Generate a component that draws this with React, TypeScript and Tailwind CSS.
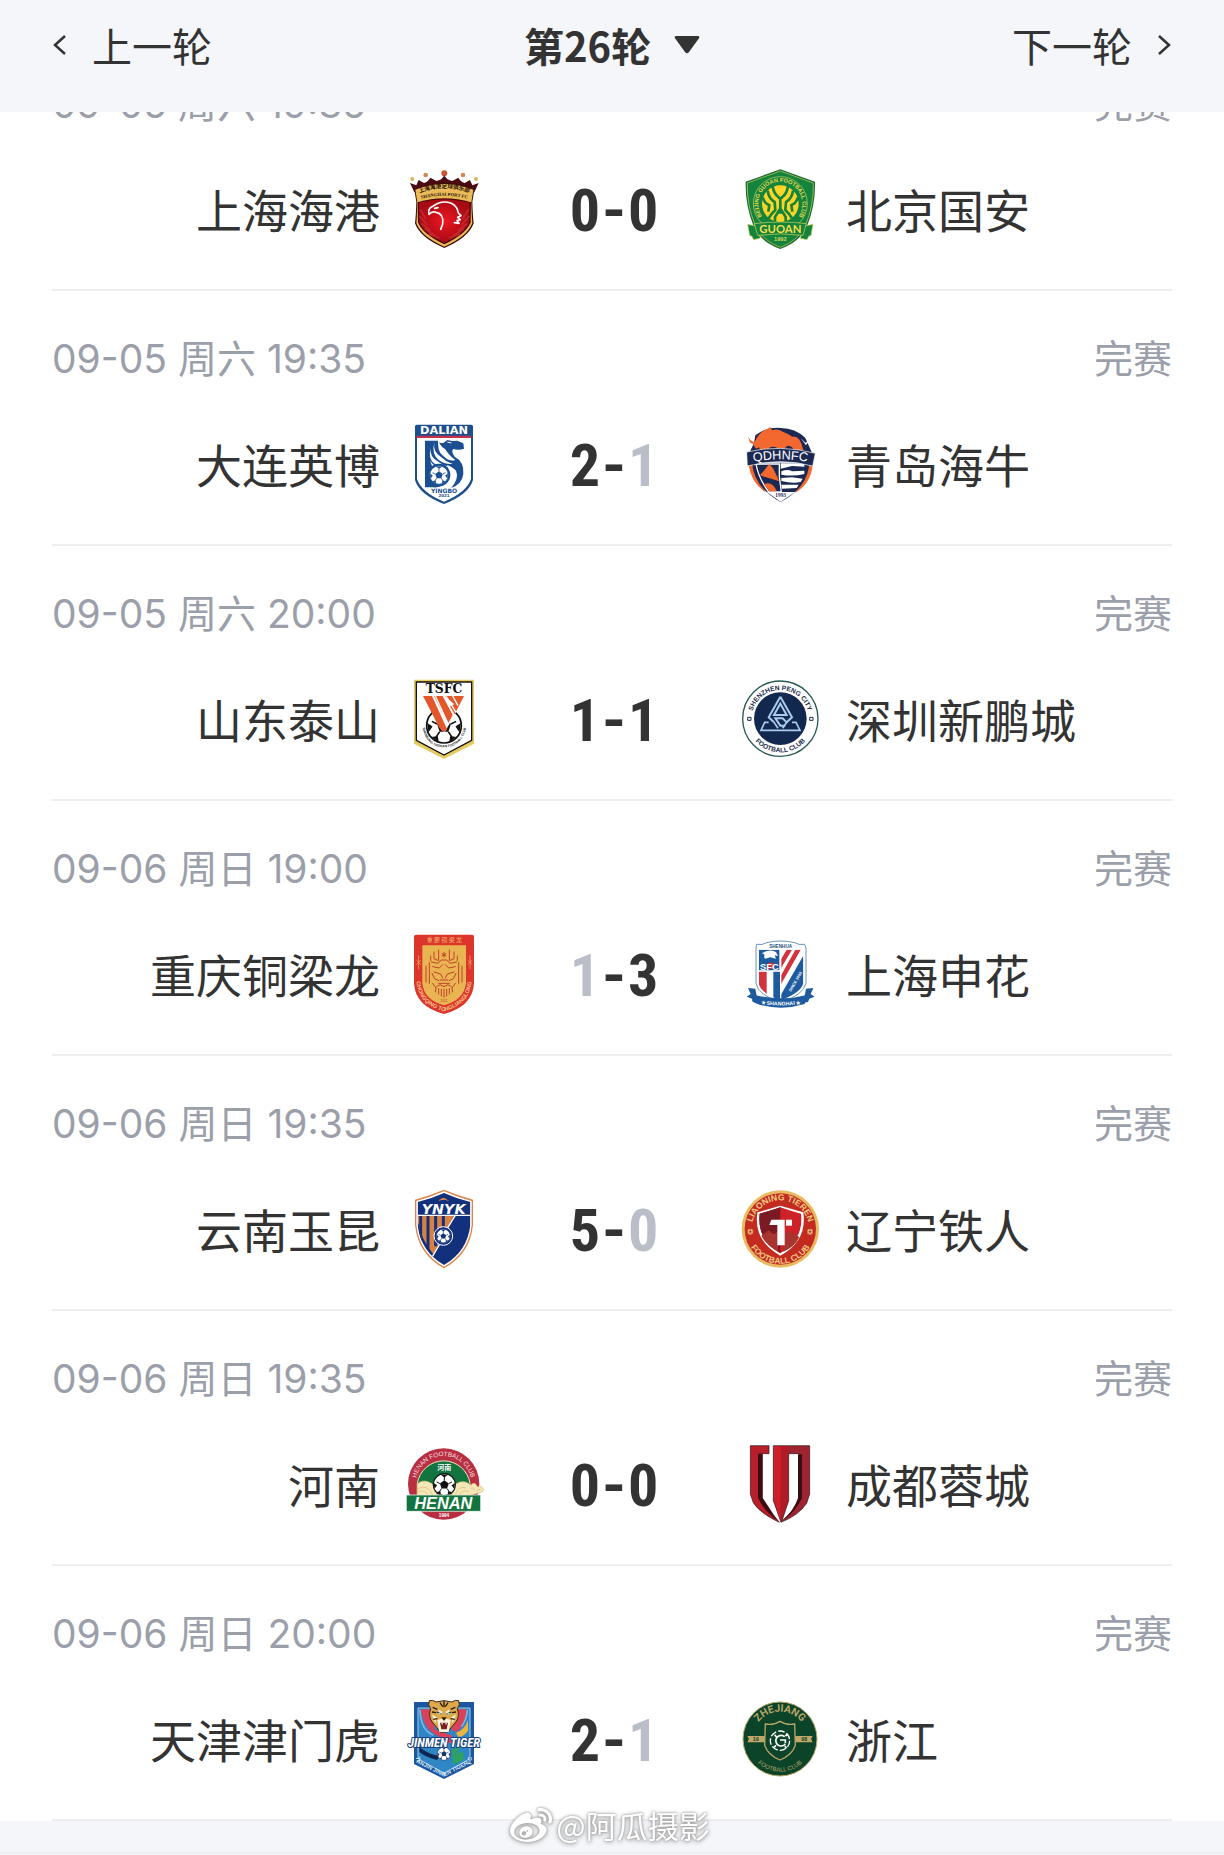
import { useState, type ReactNode } from "react";
import { SiSinaweibo } from "react-icons/si";

const cjk = "font-['Noto_Sans_CJK_SC',sans-serif]";

type CrestProps = { label: string; box: string; children: ReactNode };

function Crest({ label, box, children }: CrestProps) {
  return (
    <svg viewBox={box} role="img" aria-label={label} className="size-20 shrink-0 overflow-visible">
      {children}
    </svg>
  );
}

type CurveProps = {
  id: string;
  d: string;
  size: number;
  fill: string;
  weight?: number;
  family?: string;
  children: string;
};

function Curve({ id, d, size, fill, weight = 700, family = "Liberation Sans, sans-serif", children }: CurveProps) {
  return (
    <>
      <path id={id} d={d} fill="none" />
      <text fontSize={size} fill={fill} fontWeight={weight} fontFamily={family} textAnchor="middle">
        <textPath href={"#" + id} startOffset="50%">
          {children}
        </textPath>
      </text>
    </>
  );
}

function Ball({ x, y, r, ink = "#111", paper = "#fff" }: { x: number; y: number; r: number; ink?: string; paper?: string }) {
  return (
    <g transform={`translate(${x} ${y}) scale(${r / 10})`}>
      <circle r="10" fill={paper} stroke={ink} strokeWidth="1" />
      <path d="M0-4 4-1 2.5 3.5-2.5 3.5-4-1Z" fill={ink} />
      <path d="M-3.5-9.2H3.5L0-6.6ZM9.6-1.5 9 4 6.6 0.5ZM-9.6-1.5-9 4-6.6 0.5ZM3 9.4 7.2 6.6 3.6 6ZM-3 9.4-7.2 6.6-3.6 6Z" fill={ink} />
      <path d="M0-4V-7M4-1 7-2.5M2.5 3.5 4.5 6.5M-2.5 3.5-4.5 6.5M-4-1-7-2.5" stroke={ink} strokeWidth="0.9" />
    </g>
  );
}

function ShanghaiPort() {
  return (
    <Crest label="上海海港" box="42 42 240 240">
      <defs>
        <radialGradient id="port-red">
          <stop offset="0" stopColor="#ee1620" />
          <stop offset="1" stopColor="#a80a14" />
        </radialGradient>
      </defs>
      <g fill="#d6b565">
        <circle cx="67" cy="72" r="6" />
        <circle cx="258" cy="72" r="6" />
        <circle cx="107" cy="60" r="7" fill="#cf8a55" />
        <circle cx="219" cy="60" r="7" fill="#cf8a55" />
        <circle cx="163" cy="55" r="9" fill="#c8553a" />
      </g>
      <path d="M60 84 79 91 86 75 102 84Q115 80 121 68L139 78Q156 76 163 61 170 76 187 78L205 68Q211 80 224 84L240 75 247 91 266 84 253 112H73Z" fill="#4a0a10" />
      <path d="M73 104Q163 66 253 104L247 140Q248 180 251 205 236 248 163 279 90 248 75 205 78 180 79 140Z" fill="#3b0a0b" />
      <path d="M76 104Q163 70 250 104L244 142Q245 180 247 204 233 244 163 275 93 244 79 204 81 180 82 142Z" fill="#eabb58" />
      <path d="M83 142Q163 118 243 142L242 202Q228 238 163 268 98 238 84 202Z" fill="#4a080a" />
      <path d="M87 143Q163 122 239 143L238 201Q226 234 163 263 100 234 88 201Z" fill="url(#port-red)" />
      <path d="M92 165 106 190M90 185 110 208M96 207 120 225M106 222 134 240M118 238 146 248M234 165 220 190M236 185 216 208M230 207 206 225M220 222 192 240M208 238 180 248" stroke="#c2262b" strokeWidth="6" strokeLinecap="round" />
      <path d="M117 178Q112 160 130 153 156 134 184 145 202 154 205 174L213 182 203 187 211 194 201 197 207 205 193 203M117 178Q126 168 138 172 162 176 158 207L152 223M134 160 144 158" fill="none" stroke="#fff" strokeWidth="5" strokeLinejoin="round" strokeLinecap="round" />
      <Curve id="port-cn" d="M78 118Q163 82 248 118" size={17} fill="#2c1408" family="Noto Sans CJK SC, sans-serif">上海海港足球俱乐部</Curve>
      <Curve id="port-en" d="M78 136Q163 109 248 136" size={14} fill="#2c1408" family="Liberation Serif, serif">SHANGHAI PORT FC</Curve>
    </Crest>
  );
}

function BeijingGuoan() {
  return (
    <Crest label="北京国安" box="45 42 240 240">
      <path d="M166 43 270 80Q272 150 246 214 224 262 166 282 108 262 86 214 60 150 62 80Z" fill="#1c6b34" />
      <path d="M166 48 265 84Q267 150 241 212 219 258 166 277 113 258 91 212 65 150 67 84Z" fill="#14833c" stroke="#cfd45c" strokeWidth="2" />
      <circle cx="166" cy="146" r="81" fill="none" stroke="#cfd45c" strokeWidth="2" />
      <circle cx="166" cy="146" r="55" fill="#fdd428" />
      <path d="M143 93Q146 116 160 126L166 132 172 126Q186 116 189 93M166 132V160L150 186V204M166 160 182 186V204M128 107Q131 131 149 141L151 165Q137 178 131 190M204 107Q201 131 183 141L181 165Q195 178 201 190M113 127Q120 147 133 150L130 170M219 127Q212 147 199 150L202 170M158 172H174" fill="none" stroke="#14833c" strokeWidth="8" strokeLinejoin="round" />
      <Curve id="guoan-ring" d="M118 192A66 66 0 1 1 214 192" size={17} fill="#e6da4d">BEIJING GUOAN FOOTBALL CLUB</Curve>
      <path d="M68 208 98 214 106 250 86 254 80 243 74 242ZM264 208 234 214 226 250 246 254 252 243 258 242Z" fill="#14833c" stroke="#d6d75a" strokeWidth="2" />
      <path d="M88 206Q166 196 244 206L234 241Q166 232 98 241Z" fill="#14833c" stroke="#d6d75a" strokeWidth="2" />
      <text x="166" y="233" fontSize="34" fontWeight="700" fontFamily="Lato, sans-serif" textAnchor="middle" fill="#f2df4b">GUOAN</text>
      <text x="166" y="258" fontSize="17" fontWeight="700" fontFamily="Liberation Sans, sans-serif" textAnchor="middle" fill="#d6d75a">1992</text>
    </Crest>
  );
}

function DalianYingbo() {
  return (
    <Crest label="大连英博" box="42 42 240 240">
      <path d="M80 44H244Q249 44 249 50V210Q236 254 162 282 88 254 75 210V50Q75 44 80 44Z" fill="#1d4f8c" />
      <path d="M81 84H243V207Q230 247 162 275 94 247 81 207Z" fill="#fff" />
      <path d="M80 77H244V84H80Z" fill="#c3324a" />
      <text x="162" y="72" fontSize="34" fontWeight="700" fontFamily="DejaVu Sans, sans-serif" textAnchor="middle" fill="#fff">DALIAN</text>
      <path d="M105 92H144Q146 100 160 99L172 90 186 93 202 92 220 100 222 116Q206 122 190 117 182 124 194 140 223 155 220 192 216 222 184 234 208 204 198 182 184 168 170 166 184 190 170 216 156 234 130 232H105Z" fill="#1b4f91" />
      <path d="M146 80Q143 104 166 118 176 136 196 150 178 156 160 138 138 122 146 80ZM133 96Q128 126 154 142 168 156 188 162 164 164 146 150 124 132 133 96ZM122 115Q118 142 146 156 160 168 178 171 148 172 132 160 114 146 122 115ZM118 146Q120 160 150 176L172 180Q140 182 126 168Z" fill="#fff" />
      <path d="M172 96 184 99" stroke="#fff" strokeWidth="3" />
      <circle cx="147" cy="195" r="34" fill="#1b4f91" />
      <Ball x={147} y={195} r={28} ink="#1b4f91" />
      <text x="162" y="248" fontSize="18" fontWeight="700" fontFamily="DejaVu Sans, sans-serif" textAnchor="middle" fill="#1d4f8c">YINGBO</text>
      <text x="162" y="261" fontSize="12" fontWeight="700" fontFamily="DejaVu Sans, sans-serif" textAnchor="middle" fill="#1d4f8c">2021</text>
    </Crest>
  );
}

function QingdaoHainiu() {
  return (
    <Crest label="青岛海牛" box="1050 42 240 240">
      <path d="M1096 76Q1130 50 1172 54 1216 54 1246 84L1266 128H1078L1092 100Z" fill="#1b2852" />
      <path d="M1076 166 1096 158 1126 246Q1084 220 1076 166ZM1268 166 1248 160 1216 248Q1262 222 1268 166Z" fill="#f3682e" />
      <path d="M1086 158H1258Q1254 232 1172 276 1092 232 1086 158Z" fill="#1b2852" />
      <path d="M1098 162H1168V200L1174 246H1136Q1106 206 1098 162Z" fill="#1b2852" stroke="#fff" strokeWidth="4" />
      <path d="M1110 196 1138 162 1150 176 1168 214ZM1122 222Q1148 212 1160 244H1138Z" fill="#f3682e" />
      <path d="M1172 160H1243V170L1206 168 1172 176ZM1174 184Q1194 176 1206 184L1243 182V192Q1210 200 1174 194ZM1174 204 1206 202 1238 206 1232 216Q1208 222 1174 213ZM1174 224 1226 224 1220 234 1176 236Z" fill="#fff" />
      <path d="M1130 246H1216L1172 275Z" fill="#fff" />
      <path d="M1074 79Q1082 96 1094 96 1108 64 1130 58L1141 51 1146 61Q1164 54 1180 66 1200 74 1206 80 1230 74 1240 120L1214 122 1206 112Q1192 100 1182 120L1166 120Q1158 106 1140 112L1132 128H1110L1108 112Q1096 122 1090 102L1080 98Z" fill="#f3682e" />
      <path d="M1232 84 1246 98 1256 94 1248 106Z" fill="#fff" />
      <path d="M1070 126Q1172 102 1276 130L1268 168Q1172 142 1072 168Z" fill="#1b2852" stroke="#fff" strokeWidth="2" />
      <Curve id="qd-name" d="M1070 160Q1172 136 1272 160" size={38} fill="#fff" weight={400} family="Liberation Sans, sans-serif">QDHNFC</Curve>
      <text x="1172" y="261" fontSize="16" fontFamily="Liberation Serif, serif" fontWeight="700" textAnchor="middle" fill="#1b2852">1993</text>
    </Crest>
  );
}

function ShandongTaishan() {
  return (
    <Crest label="山东泰山" box="42 42 240 240">
      <path d="M72 44H252V236L162 282 72 236Z" fill="#e6cb62" />
      <path d="M79 51H245V226L162 270 79 226Z" fill="#fff" stroke="#111" strokeWidth="4" />
      <Ball x={162} y={182} r={52} />
      <path d="M148 133 162 126 176 133 170 150H154Z" fill="#111" />
      <path d="M100 93H224L166 199Q160 202 154 194Z" fill="#fff" />
      <path d="M99 93H126L172 194 160 200 148 188ZM132 93H158L188 150 174 176ZM164 93H222L194 148 180 124 193 118Z" fill="#e3582a" />
      <path d="M136 93 176 180M168 93 198 142M188 93 204 122" stroke="#fff" strokeWidth="4" />
      <text x="162" y="83" fontSize="37" fontWeight="700" fontFamily="DejaVu Serif, serif" textAnchor="middle" fill="#111">TSFC</text>
      <Curve id="sd-ring" d="M96 180Q106 247 162 247 218 247 230 180" size={10} fill="#222">SHANDONG TAISHAN FOOTBALL CLUB</Curve>
    </Crest>
  );
}

function ShenzhenPengCity() {
  return (
    <Crest label="深圳新鹏城" box="1050 42 240 240">
      <circle cx="1171" cy="161" r="113" fill="#fff" stroke="#2b5a55" strokeWidth="4" />
      <circle cx="1171" cy="161" r="79" fill="#12284f" />
      <path d="M1171 95 1206 157 1190 172 1178 160H1156L1171 182 1186 182M1171 95 1136 157 1152 172M1171 116 1190 150H1152Z" fill="none" stroke="#a9cbec" strokeWidth="6" />
      <path d="M1136 172H1124L1113 196H1230L1218 172H1206M1152 172 1164 190M1190 172 1178 190" fill="none" stroke="#a9cbec" strokeWidth="5" />
      <Curve id="sz-top" d="M1085 161A86 86 0 0 1 1257 161" size={20} fill="#1c2c4e" weight={700}>SHENZHEN PENG CITY</Curve>
      <Curve id="sz-bottom" d="M1070 161A101 101 0 0 0 1272 161" size={20} fill="#1c2c4e">FOOTBALL CLUB</Curve>
      <path d="M1073 157H1083V166H1073ZM1259 157H1269V166H1259Z" fill="none" stroke="#1c2c4e" strokeWidth="3" />
    </Crest>
  );
}

function ChongqingTongliangLong() {
  return (
    <Crest label="重庆铜梁龙" box="42 42 240 240">
      <path d="M78 44H246Q252 44 252 50V190Q248 260 162 282 76 260 72 190V50Q72 44 78 44Z" fill="#dc352c" />
      <path d="M97 76H228V190Q222 240 162 256 102 240 97 190Z" fill="#e9b552" />
      <text x="163" y="67" fontSize="18" fontFamily="Noto Sans CJK SC, sans-serif" textAnchor="middle" fill="#f2b566">重 慶 铜 梁 龙</text>
      <g fill="none" stroke="#c2402c" strokeWidth="3" strokeLinecap="round">
        <path d="M162 97V111M156 101 168 108M168 101 156 108M146 90V122L132 116V96M178 90V122L192 116V96M118 128V190M108 138V186M206 128V190M216 138V186M122 108V122M202 108V122" />
        <path d="M124 126 144 130 154 120H170L180 130 200 126M128 140 148 144 158 134M196 140 176 144 166 134M132 156 152 162 158 174M192 156 172 162 166 174M126 160 134 176 146 182M198 160 190 176 178 182M146 190H178M150 180H174M140 200 150 194 162 200 174 194 184 200M128 190 138 204 136 216M196 190 186 204 188 216M146 206V222M154 208V228M162 208V232M170 208V228M178 206V222" />
      </g>
      <path d="M86 106V148M79 120 93 134M93 120 79 134M240 106V148M233 120 247 134M247 120 233 134" stroke="#f2b566" strokeWidth="2" />
      <text x="162" y="246" fontSize="10" fontFamily="Liberation Sans, sans-serif" textAnchor="middle" fill="#c2402c">2021</text>
      <Curve id="cq-ring" d="M79 176Q80 252 162 274 244 252 245 176" size={17} fill="#f6c487">CHONGQING TONGLIANGLONG</Curve>
    </Crest>
  );
}

function ShanghaiShenhua() {
  return (
    <Crest label="上海申花" box="1050 42 240 240">
      <path d="M1074 204 1096 206 1104 248 1090 246 1086 236 1070 230 1082 222ZM1270 204 1248 206 1240 248 1254 246 1258 236 1274 230 1262 222Z" fill="#1f5c9e" />
      <path d="M1100 73Q1118 76 1130 68 1172 58 1214 68 1226 76 1244 73L1248 84V190Q1240 226 1172 246 1104 226 1098 190V84Z" fill="#fff" stroke="#1f5f95" strokeWidth="2" />
      <clipPath id="shenhua-body">
        <path d="M1106 89H1240V190Q1232 220 1172 240 1112 220 1106 190Z" />
      </clipPath>
      <g clipPath="url(#shenhua-body)">
        <path d="M1106 86H1172V250H1106Z" fill="#fff" />
        <path d="M1106 154H1130V240H1106Z" fill="#d2333d" />
        <path d="M1150 154H1170V250H1150Z" fill="#1e5aa0" />
        <path d="M1106 86H1168V152H1106Z" fill="#1e5aa0" />
        <path d="M1172 120 1192 86H1208L1172 146ZM1172 168 1218 86H1234L1172 194Z" fill="#d2333d" />
        <path d="M1172 226 1244 100V190Q1226 226 1172 246Z" fill="#1e5aa0" />
        <path d="M1172 86V240M1106 153H1172" stroke="#fff" strokeWidth="4" />
      </g>
      <path d="M1116 100Q1136 86 1158 96L1164 108 1154 106 1158 116 1140 112 1126 116Q1120 112 1124 104Z" fill="#fff" />
      <path d="M1134 128H1152L1148 146H1130Z" fill="#d2333d" />
      <text x="1138" y="149" fontSize="28" fontWeight="700" fontFamily="Liberation Sans, sans-serif" textAnchor="middle" fill="#fff">SFC</text>
      <text x="1172" y="83" fontSize="14" fontWeight="700" fontFamily="Liberation Sans, sans-serif" textAnchor="middle" fill="#1f4f78">SHENHUA</text>
      <text transform="translate(1203 216) rotate(-60)" fontSize="12" fontWeight="700" fontFamily="Liberation Sans, sans-serif" fill="#fff">SINCE 1993</text>
      <path d="M1092 224Q1172 246 1254 224L1244 252Q1172 274 1102 252L1086 244Z" fill="#1e5aa0" />
      <Curve id="sh-name" d="M1096 249Q1172 264 1248 249" size={16} fill="#fff">★ SHANGHAI ★</Curve>
    </Crest>
  );
}

function YunnanYukun() {
  return (
    <Crest label="云南玉昆" box="42 42 240 240">
      <path d="M162 44Q206 62 249 74V150Q240 238 162 280 84 238 75 150V74Q118 62 162 44Z" fill="#dd8448" />
      <path d="M162 49Q204 67 245 78V150Q236 234 162 275 88 234 79 150V78Q120 67 162 49Z" fill="#fff" />
      <clipPath id="yukun-body">
        <path d="M162 54Q202 72 241 81V150Q232 230 162 270 92 230 83 150V81Q122 72 162 54Z" />
      </clipPath>
      <g clipPath="url(#yukun-body)">
        <path d="M80 50H244V274H80Z" fill="#12307c" />
        <path d="M80 122H192L130 238Q90 190 80 122Z" fill="#d98143" />
        <path d="M92 122V200M114 122V226M137 122V214M160 122V160" stroke="#12307c" strokeWidth="9" />
        <path d="M80 121H244M196 121 172 160M150 206 124 250" stroke="#fff" strokeWidth="4" />
      </g>
      <circle cx="160" cy="183" r="28" fill="#12307c" stroke="#fff" strokeWidth="3" />
      <Ball x={160} y={183} r={21} ink="#12307c" />
      <path d="M144 77 156 70 162 68 178 78 163 74Z" fill="#dd8448" />
      <text x="161" y="116" fontSize="43" fontWeight="700" fontStyle="italic" fontFamily="DejaVu Sans, sans-serif" textAnchor="middle" fill="#fff">YNYK</text>
    </Crest>
  );
}

function LiaoningTieren() {
  return (
    <Crest label="辽宁铁人" box="1050 42 240 240">
      <circle cx="1171" cy="162" r="116" fill="#e8ba62" />
      <circle cx="1171" cy="162" r="107" fill="#c32a20" />
      <path d="M1171 92Q1206 102 1240 112 1252 198 1171 242 1090 198 1102 112 1136 102 1171 92Z" fill="#fff" />
      <path d="M1171 97Q1202 108 1233 116 1242 194 1171 235 1100 194 1109 116 1140 108 1171 97Z" fill="#cf2128" />
      <path d="M1171 97V235Q1100 194 1109 116 1140 108 1171 97Z" fill="#7b1a23" />
      <path d="M1114 182 1136 166 1150 178 1164 170V230Q1128 210 1114 182ZM1180 182 1196 168 1228 186Q1214 216 1180 230Z" fill="#a8342f" />
      <path d="M1138 150 1144 134H1184V211H1162V150Z" fill="#fff" />
      <path d="M1188 134H1206V152H1188Z" fill="#fff" />
      <Curve id="ln-top" d="M1085 162A86 86 0 0 1 1257 162" size={26} fill="#edc982" weight={600}>LIAONING TIEREN</Curve>
      <Curve id="ln-bottom" d="M1067 162A104 104 0 0 0 1275 162" size={25} fill="#edc982" weight={600}>FOOTBALL CLUB</Curve>
      <Ball x={1081} y={170} r={9} ink="#c32a20" paper="#edc982" />
      <Ball x={1260} y={170} r={9} ink="#c32a20" paper="#edc982" />
    </Crest>
  );
}

function Henan() {
  return (
    <Crest label="河南" box="42 42 240 240">
      <circle cx="161" cy="162" r="107" fill="#b92f42" />
      <path d="M82 195V160A80 80 0 0 1 240 160V195Z" fill="#12743e" stroke="#f3e6bd" strokeWidth="3" />
      <g fill="#f5e8b8" stroke="#dcb96c" strokeWidth="2">
        <path d="M82 195V162Q96 148 116 156 140 164 140 195ZM186 195Q186 162 210 156 230 152 242 166 254 152 262 170 276 166 280 178 280 188 262 190L242 195Z" />
        <path d="M84 176Q112 160 128 195M84 186Q104 176 114 195M196 195Q204 166 228 174M208 195Q214 180 236 184M242 178Q250 168 254 180M262 184Q262 176 272 178" fill="none" />
      </g>
      <Ball x={163} y={164} r={33} />
      <text x="163" y="119" fontSize="21" fontWeight="700" fontFamily="Noto Sans CJK SC, sans-serif" textAnchor="middle" fill="#fff">河南</text>
      <Curve id="hn-ring" d="M77 162A84 84 0 0 1 245 162" size={19} fill="#f7dfe0" weight={400}>HENAN FOOTBALL CLUB</Curve>
      <path d="M49 195H272V244H49Z" fill="#12743e" stroke="#fff" strokeWidth="2" />
      <text x="160" y="236" fontSize="49" fontWeight="700" fontStyle="italic" fontFamily="Liberation Sans, sans-serif" textAnchor="middle" fill="#fff">HENAN</text>
      <text x="162" y="261" fontSize="14" fontWeight="700" fontFamily="Liberation Sans, sans-serif" textAnchor="middle" fill="#fff">1994</text>
    </Crest>
  );
}

function ChengduRongcheng() {
  return (
    <Crest label="成都蓉城" box="1050 42 240 240">
      <path d="M1081 47H1137V71H1117V204L1150 254 1168 277Q1110 250 1090 218L1081 192Z" fill="#b81f2a" stroke="#2a1416" strokeWidth="2" />
      <path d="M1104 71H1117V204L1160 270Q1124 244 1104 204Z" fill="#3a0d13" />
      <path d="M1150 47H1259V192L1250 220Q1226 256 1173 277L1150 212Z" fill="#9d2430" stroke="#2a1416" strokeWidth="2" />
      <path d="M1152 49H1194V212L1171 270 1152 210Z" fill="#cf1f2a" />
      <path d="M1172 49H1194V212L1171 270Z" fill="#b01b26" />
      <path d="M1196 71H1228V206Q1210 246 1176 272L1196 212Z" fill="#fff" stroke="#2a1416" strokeWidth="2" />
      <path d="M1224 73H1236V204Q1218 244 1180 270 1212 240 1224 204Z" fill="#3a0d13" />
    </Crest>
  );
}

function TianjinJinmenTiger() {
  return (
    <Crest label="天津津门虎" box="42 57 240 240">
      <path d="M72 66H252V252L162 297 72 252Z" fill="#1d56a0" />
      <path d="M84 84H240V236L162 280 84 236Z" fill="#2f86c4" stroke="#9fcbe8" strokeWidth="3" />
      <path d="M92 88H122L136 150 184 166 200 190H180L130 160Q100 140 92 88Z" fill="#d9425a" />
      <path d="M204 88H230Q232 130 200 156L184 150Z" fill="#d9425a" />
      <path d="M198 158Q224 150 234 120V152Q220 172 204 170Z" fill="#efb43c" />
      <path d="M186 208 214 196 200 222 220 214V240L190 254Z" fill="#2da35f" />
      <path d="M88 200Q110 222 152 228L140 240Q104 230 88 216Z" fill="#10254f" />
      <path d="M90 90Q92 150 130 166M232 90Q230 120 214 140" fill="none" stroke="#7fb4e6" strokeWidth="5" />
      <path d="M118 62Q128 58 138 66 162 58 186 66 196 58 206 62 212 74 202 86 210 108 198 126L184 142 174 156H150L140 142 126 126Q114 108 122 86 112 74 118 62Z" fill="#dda94b" stroke="#3a2a1c" strokeWidth="3" />
      <path d="M126 104 140 112 136 130ZM198 104 184 112 188 130ZM144 88 158 96 150 106ZM180 88 166 96 174 106ZM142 120 154 116 162 122 170 116 182 120 176 156H148Z" fill="#fff6e6" />
      <path d="M162 64V82M150 68 158 80M174 68 166 80M128 82 142 88M196 82 182 88M126 96 138 98M198 96 186 98M130 118 142 116M194 118 182 116M140 96 154 102M184 96 170 102" stroke="#2b1b12" strokeWidth="4" />
      <path d="M154 112H170L162 122Z" fill="#2b1b12" />
      <path d="M144 98H152V103H144ZM172 98H180V103H172Z" fill="#7fd0c4" />
      <path d="M150 128H174L170 148H154Z" fill="#7c1f22" />
      <path d="M153 128H158V136ZM166 128H171L168 136Z" fill="#fff" />
      <Ball x={162} y={221} r={20} ink="#16356e" />
      <text x="162" y="201" fontSize="38" fontWeight="700" fontStyle="italic" fontFamily="Roboto Condensed, Roboto, sans-serif" textAnchor="middle" fill="#fff" stroke="#173f7e" strokeWidth="6" strokeLinejoin="round" paintOrder="stroke">JINMEN TIGER</text>
      <Curve id="tj-ring" d="M76 212 80 248 162 290 244 248 248 212" size={17} fill="#d7eaf8">TIANJIN JINMEN TIGER FC</Curve>
    </Crest>
  );
}

function Zhejiang() {
  return (
    <Crest label="浙江" box="1050 57 240 240">
      <circle cx="1170" cy="177" r="111" fill="#0c4429" stroke="#b9a467" strokeWidth="3" />
      <path d="M1072 168H1126V187H1072L1077 177ZM1268 168H1214V187H1268L1263 177Z" fill="#bfa768" />
      <path d="M1170 124Q1188 136 1214 132L1216 196Q1206 226 1170 240 1134 226 1124 196L1126 132Q1152 136 1170 124Z" fill="#0c4429" stroke="#b9a467" strokeWidth="4" />
      <circle cx="1170" cy="182" r="29" fill="none" stroke="#fff" strokeWidth="4" strokeDasharray="20 6" />
      <path d="M1184 170A16 16 0 1 0 1186 192M1170 180H1186V190M1160 172 1154 164M1186 168 1194 162M1158 196 1152 202M1184 198 1190 204" fill="none" stroke="#fff" strokeWidth="5" />
      <Curve id="zj-top" d="M1088 177A82 82 0 0 1 1252 177" size={31} fill="#b9a467" family="Roboto, sans-serif">ZHEJIANG</Curve>
      <Curve id="zj-bottom" d="M1072 177A98 98 0 0 0 1268 177" size={18} fill="#b9a467" weight={400}>FOOTBALL CLUB</Curve>
      <text x="1097" y="184" fontSize="16" fontWeight="700" fontFamily="Liberation Sans, sans-serif" textAnchor="middle" fill="#0c4429">19</text>
      <text x="1243" y="184" fontSize="16" fontWeight="700" fontFamily="Liberation Sans, sans-serif" textAnchor="middle" fill="#0c4429">98</text>
    </Crest>
  );
}

type Side = { name: string; goals: number; crest: ReactNode };
type Match = { date: string; home: Side; away: Side };

const matches: Match[] = [
  { date: "09-05 周六 19:35", home: { name: "上海海港", goals: 0, crest: <ShanghaiPort /> }, away: { name: "北京国安", goals: 0, crest: <BeijingGuoan /> } },
  { date: "09-05 周六 19:35", home: { name: "大连英博", goals: 2, crest: <DalianYingbo /> }, away: { name: "青岛海牛", goals: 1, crest: <QingdaoHainiu /> } },
  { date: "09-05 周六 20:00", home: { name: "山东泰山", goals: 1, crest: <ShandongTaishan /> }, away: { name: "深圳新鹏城", goals: 1, crest: <ShenzhenPengCity /> } },
  { date: "09-06 周日 19:00", home: { name: "重庆铜梁龙", goals: 1, crest: <ChongqingTongliangLong /> }, away: { name: "上海申花", goals: 3, crest: <ShanghaiShenhua /> } },
  { date: "09-06 周日 19:35", home: { name: "云南玉昆", goals: 5, crest: <YunnanYukun /> }, away: { name: "辽宁铁人", goals: 0, crest: <LiaoningTieren /> } },
  { date: "09-06 周日 19:35", home: { name: "河南", goals: 0, crest: <Henan /> }, away: { name: "成都蓉城", goals: 0, crest: <ChengduRongcheng /> } },
  { date: "09-06 周日 20:00", home: { name: "天津津门虎", goals: 2, crest: <TianjinJinmenTiger /> }, away: { name: "浙江", goals: 1, crest: <Zhejiang /> } },
];

function MatchRow({ match }: { match: Match }) {
  const { home, away } = match;
  return (
    <li className="border-b-2 border-[#eeeef1] pt-12 pb-10">
      <div className="flex h-10 items-center justify-between font-['Inter','Noto_Sans_CJK_SC',sans-serif] text-[39px] leading-10 text-[#9b9faa]">
        <time>{match.date}</time>
        <span>完赛</span>
      </div>
      <div className="mt-[45px] grid h-20 grid-cols-[1fr_80px_256px_80px_1fr] items-center text-[46px] leading-none text-[#333]">
        <span className="pr-6 pb-0.5 text-right whitespace-nowrap">{home.name}</span>
        {home.crest}
        <div className="grid grid-cols-[1fr_20px_1fr] items-center gap-1 pt-1 pl-1 font-['Roboto_Condensed','Roboto',sans-serif] text-[60px] font-bold">
          <span className={home.goals < away.goals ? "text-right text-[#b9bec9]" : "text-right"}>{home.goals}</span>
          <span className="flex justify-center font-['Roboto',sans-serif]">-</span>
          <span className={away.goals < home.goals ? "text-left text-[#b9bec9]" : "text-left"}>{away.goals}</span>
        </div>
        {away.crest}
        <span className="pb-0.5 pl-[26px] whitespace-nowrap">{away.name}</span>
      </div>
    </li>
  );
}

export default function App() {
  const [round, setRound] = useState(26);
  return (
    <div className={`relative min-h-screen overflow-hidden bg-[#f4f6fa] text-[#333] ${cjk}`}>
      <header className="relative z-10 grid h-28 grid-cols-[1fr_auto_1fr] items-center bg-[#f4f6fa] px-[52px] pb-[23px] text-[40px] leading-[60px]">
        <button type="button" onClick={() => setRound(Math.max(1, round - 1))} className="flex items-center gap-[26px] justify-self-start">
          <svg viewBox="0 0 14 20" className="h-5 w-3.5" fill="none" stroke="#333" strokeWidth="2.5" aria-hidden="true">
            <path d="M13 1 3 10 13 19" />
          </svg>
          上一轮
        </button>
        <div className="relative flex items-center">
          <select
            aria-label="轮次"
            value={round}
            onChange={(e) => setRound(Number(e.target.value))}
            className="appearance-none bg-transparent pr-12 font-bold outline-none"
          >
            {Array.from({ length: 30 }, (_, i) => (
              <option key={i} value={i + 1}>{`第${i + 1}轮`}</option>
            ))}
          </select>
          <svg viewBox="0 0 26 20" className="pointer-events-none absolute right-0 h-5 w-[26px]" fill="#333" aria-hidden="true">
            <path d="M2.500 1H23.500Q26.500 1 24.800 3.500L15 17Q13 19.500 11 17L1.200 3.500Q-0.500 1 2.500 1Z" />
          </svg>
        </div>
        <button type="button" onClick={() => setRound(Math.min(30, round + 1))} className="flex items-center gap-[26px] justify-self-end">
          下一轮
          <svg viewBox="0 0 14 20" className="h-5 w-3.5" fill="none" stroke="#333" strokeWidth="2.5" aria-hidden="true">
            <path d="M1 1 11 10 1 19" />
          </svg>
        </button>
      </header>

      <main className="-mt-[76px] bg-white px-[52px]">
        <ul>
          {matches.map((m) => (
            <MatchRow key={m.home.name} match={m} />
          ))}
        </ul>
      </main>
      <footer className="h-[33px] border-b-2 border-[#eeeef1]" />

      <div className="absolute inset-x-0 bottom-[9px] flex items-center justify-center gap-1 pr-1 text-[31px] leading-10 text-white [filter:drop-shadow(0_0_1px_#999)_drop-shadow(0_1px_2px_#aaa)]">
        <SiSinaweibo className="size-[42px]" aria-hidden="true" />
        <span>@阿瓜摄影</span>
      </div>
    </div>
  );
}
